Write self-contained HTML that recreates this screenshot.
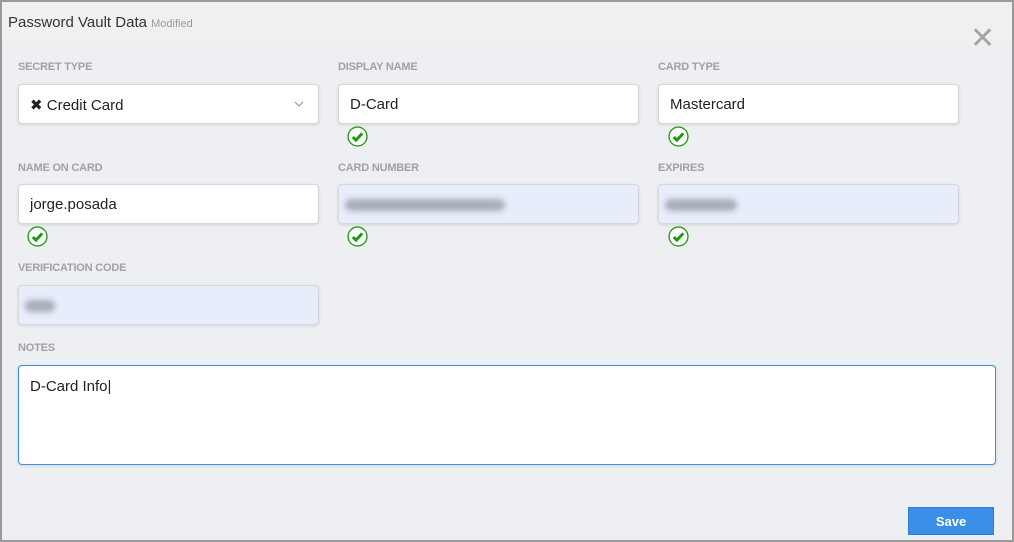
<!DOCTYPE html>
<html><head><style>
*{box-sizing:border-box;margin:0;padding:0}
body{width:1014px;height:542px;overflow:hidden;font-family:"Liberation Sans",sans-serif;background:#9a9a9a;position:relative}
.panel{position:absolute;left:2px;top:2px;width:1010px;height:538px;background:#eeeff2}
.hdr{position:absolute;left:0;top:0;width:1010px;height:40px;background:#f0f0f1}
.title{position:absolute;left:6px;top:12px;font-size:15px;color:#333}
.title small{font-size:11px;color:#9a9a9a}
.x{position:absolute;left:968px;top:22px;font-size:30px;color:#a5a5a5;line-height:30px}
.lbl{position:absolute;font-size:11px;font-weight:bold;color:#a0a0a6;letter-spacing:-0.2px}
.in{position:absolute;width:301px;height:40px;background:#fff;border:1px solid #d6d6dc;border-radius:4px;box-shadow:0 1px 3px rgba(0,0,0,.12);font-size:15px;color:#222;padding:11px 11px}
.bl{background:#e7edfb}
.blur{position:absolute;top:14px;left:6px;height:12px;border-radius:6px;background:#a9adb8;filter:blur(3px)}
.ck{position:absolute;width:21px;height:21px}
.btn{position:absolute;left:908px;top:507px;width:86px;height:28px;background:#3a8ee6;color:#fff;font-size:13px;font-weight:bold;text-align:center;line-height:28px;border:1px solid #2e7fd4}
</style></head><body>
<div class="panel">
<div class="hdr"><div class="title">Password Vault Data <small>Modified</small></div><div class="x">✕</div></div>
</div>
<div class="lbl" style="left:18px;top:61px">SECRET TYPE</div>
<div class="lbl" style="left:338px;top:61px">DISPLAY NAME</div>
<div class="lbl" style="left:658px;top:61px">CARD TYPE</div>
<div class="in" style="left:18px;top:84px">✖ Credit Card<svg style="position:absolute;right:14px;top:16px" width="10" height="6" viewBox="0 0 10 6"><path d="M1 1l4 4 4-4" fill="none" stroke="#999" stroke-width="1.2"/></svg></div>
<div class="in" style="left:338px;top:84px">D-Card</div>
<div class="in" style="left:658px;top:84px">Mastercard</div>
<div class="lbl" style="left:18px;top:162px">NAME ON CARD</div>
<div class="lbl" style="left:338px;top:162px">CARD NUMBER</div>
<div class="lbl" style="left:658px;top:162px">EXPIRES</div>
<div class="in" style="left:18px;top:184px">jorge.posada</div>
<div class="in bl" style="left:338px;top:184px"><div class="blur" style="width:160px"></div></div>
<div class="in bl" style="left:658px;top:184px"><div class="blur" style="width:72px"></div></div>
<div class="lbl" style="left:18px;top:262px">VERIFICATION CODE</div>
<div class="in bl" style="left:18px;top:285px"><div class="blur" style="width:30px"></div></div>
<div class="lbl" style="left:18px;top:342px">NOTES</div>
<div class="in" style="left:18px;top:365px;width:978px;height:100px;border-color:#3a8ee6;padding-top:12px">D-Card Info|</div>
<svg class="ck" style="left:347px;top:126px" viewBox="0 0 20 20"><circle cx="10" cy="10" r="9" fill="#fff" stroke="#2a9a1a" stroke-width="1.3"/><path d="M5.5 10.5l3 3 6-6.5" fill="none" stroke="#1f9a10" stroke-width="2.8"/></svg>
<svg class="ck" style="left:668px;top:126px" viewBox="0 0 20 20"><circle cx="10" cy="10" r="9" fill="#fff" stroke="#2a9a1a" stroke-width="1.3"/><path d="M5.5 10.5l3 3 6-6.5" fill="none" stroke="#1f9a10" stroke-width="2.8"/></svg>
<svg class="ck" style="left:27px;top:226px" viewBox="0 0 20 20"><circle cx="10" cy="10" r="9" fill="#fff" stroke="#2a9a1a" stroke-width="1.3"/><path d="M5.5 10.5l3 3 6-6.5" fill="none" stroke="#1f9a10" stroke-width="2.8"/></svg>
<svg class="ck" style="left:347px;top:226px" viewBox="0 0 20 20"><circle cx="10" cy="10" r="9" fill="#fff" stroke="#2a9a1a" stroke-width="1.3"/><path d="M5.5 10.5l3 3 6-6.5" fill="none" stroke="#1f9a10" stroke-width="2.8"/></svg>
<svg class="ck" style="left:668px;top:226px" viewBox="0 0 20 20"><circle cx="10" cy="10" r="9" fill="#fff" stroke="#2a9a1a" stroke-width="1.3"/><path d="M5.5 10.5l3 3 6-6.5" fill="none" stroke="#1f9a10" stroke-width="2.8"/></svg>
<div class="btn">Save</div>
</body></html>
